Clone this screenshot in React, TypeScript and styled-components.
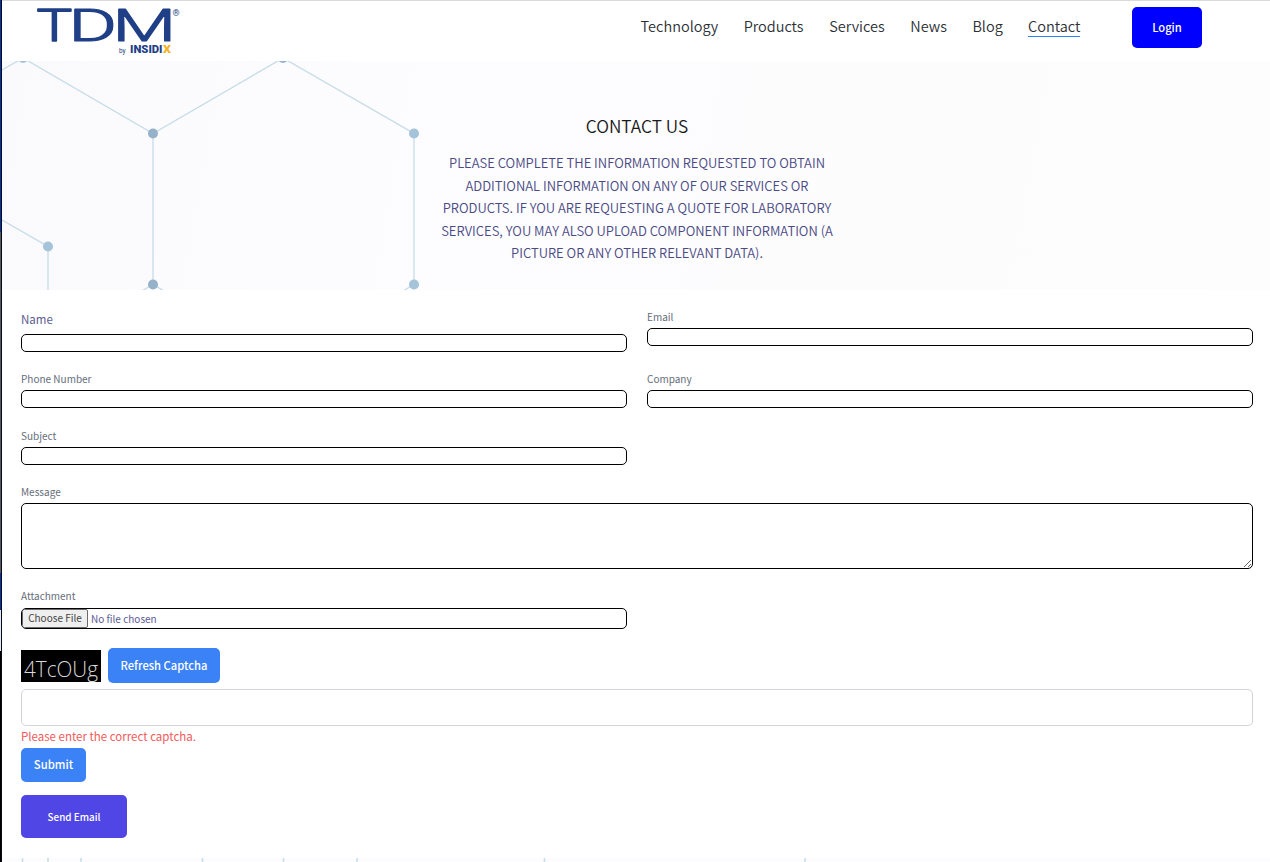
import React from 'react';
import styled, { createGlobalStyle } from 'styled-components';

const GlobalStyle = createGlobalStyle`
  *, *::before, *::after { box-sizing: border-box; }
  body {
    margin: 0;
    background: #fff;
    font-family: "Noto Sans CJK SC", "Noto Sans", sans-serif;
    overflow: hidden;
  }
  button, input, textarea { font-family: inherit; margin: 0; }
`;

const Screen = styled.div`
  display: flex;
  width: 1270px;
  height: 862px;
  overflow: hidden;
`;

const Edge = styled.div`
  flex: none;
  width: 2px;
  border-right: 1px solid #0a0a14;
  background: linear-gradient(
    #0033a0 0 232px, #55585c 232px 573px, #0033a0 573px 610px, #dfe8f5 610px 651px, #000 651px
  );
`;

const Window = styled.div`
  flex: 1;
  display: flex;
  flex-direction: column;
  border-top: 1px solid #dadada;
`;

const Header = styled.header`
  flex: none;
  display: flex;
  align-items: flex-start;
  height: 60px;
  padding: 6px 68px 0 34px;
`;

const Logo = styled.svg`
  flex: none;
  width: 146px;
  height: 50px;
  overflow: visible;
`;

const LogoLetters = styled.g`
  font-size: 44px;
  font-weight: 300;
  stroke: #1f3f87;
  stroke-width: 1.7px;
  stroke-linejoin: round;

  text { vector-effect: non-scaling-stroke; }
`;

const Nav = styled.nav`
  display: flex;
  gap: 25.6px;
  margin-left: auto;
  padding-top: 8px;
`;

const NavLink = styled.a<{ $active?: boolean; $w: number }>`
  width: ${(p) => p.$w}px;
  height: 22px;
  line-height: 22px;
  font-size: 14.5px;
  font-weight: 350;
  color: #2b3035;
  white-space: nowrap;
  border-bottom: ${(p) => (p.$active ? '1px solid #2f80ed' : 'none')};
`;

const LoginButton = styled.button`
  width: 70px;
  height: 41px;
  margin-left: 52px;
  padding: 0 0 2px;
  border: 0;
  border-radius: 5px;
  background: #0000ff;
  color: #fff;
  font-size: 11.2px;
  font-weight: 500;
`;

const Hero = styled.section`
  flex: none;
  height: 229px;
  display: grid;
  background: linear-gradient(100deg, #fafafc, #fdfcfe 35%, #fdfdfd 100%);
`;

const Pattern = styled.svg`
  grid-area: 1 / 1;
  width: 1268px;
  height: 229px;
`;

const HeroText = styled.div`
  grid-area: 1 / 1;
  justify-self: center;
  width: 420px;
  padding: 52px 0 0 2px;
  text-align: center;
`;

const Title = styled.h1`
  margin: 0;
  font-size: 17.3px;
  line-height: 26px;
  font-weight: 350;
  color: #1a1a1a;
`;

const Intro = styled.p`
  margin: 13px 0 0;
  font-size: 13px;
  line-height: 22.5px;
  font-weight: 350;
  color: #4a4a84;
  white-space: pre-line;
`;

const Form = styled.form`
  flex: none;
  display: flex;
  flex-direction: column;
  align-items: flex-start;
  height: 568px;
  padding: 20px 17px 0 19px;
`;

const Fields = styled.div`
  display: grid;
  width: 1232px;
  grid-template-columns: 606px 606px;
  column-gap: 20px;
  grid-template-rows: 62px 57px 56px 104px 59px;
`;

const Field = styled.label<{ $wide?: boolean; $first?: boolean; $gap?: number }>`
  grid-column: ${(p) => (p.$wide ? '1 / -1' : p.$first ? '1' : 'auto')};
  display: flex;
  flex-direction: column;
  gap: ${(p) => p.$gap ?? 4}px;
`;

const Label = styled.span<{ $large?: boolean }>`
  height: ${(p) => (p.$large ? 20 : 14)}px;
  line-height: ${(p) => (p.$large ? 19 : 14)}px;
  font-size: ${(p) => (p.$large ? 11.5 : 10)}px;
  color: ${(p) => (p.$large ? '#5a5a92' : '#656d7a')};
`;

const Input = styled.input`
  width: 100%;
  height: 18px;
  padding: 0 4px;
  border: 1px solid #000;
  border-radius: 5px;
  background: #fff;
`;

const TextArea = styled.textarea`
  display: block;
  width: 100%;
  height: 66px;
  border: 1px solid #000;
  border-radius: 5px;
  background: #fff;
`;

const FileBox = styled.span`
  display: flex;
  align-items: center;
  height: 21px;
  border: 1px solid #000;
  border-radius: 5px;
  color: #5a5a92;
  font-size: 10px;
  overflow: hidden;
`;

const ChooseFile = styled.span`
  width: 66px;
  height: 19px;
  margin-right: 3px;
  border: 1px solid #6b6b6b;
  border-radius: 2px;
  background: #efefef;
  color: #444;
  line-height: 16px;
  text-align: center;
`;

const CaptchaRow = styled.div`
  display: flex;
  align-items: center;
  gap: 7px;
  height: 35px;
`;

const Captcha = styled.svg`
  width: 80px;
  height: 32px;
  margin-top: 1px;
  background: #000;
`;

const Button = styled.button<{ $w: number; $h: number; $bg: string; $size: number; $top?: number; $lift?: number }>`
  width: ${(p) => p.$w}px;
  height: ${(p) => p.$h}px;
  margin-top: ${(p) => p.$top ?? 0}px;
  padding: 0 0 ${(p) => p.$lift ?? 0}px;
  border: 0;
  border-radius: 5px;
  background: ${(p) => p.$bg};
  color: #fff;
  font-size: ${(p) => p.$size}px;
  font-weight: 500;
`;

const CaptchaInput = styled.input`
  width: 1232px;
  height: 37px;
  margin-top: 6px;
  border: 1px solid #d1d5db;
  border-radius: 5px;
`;

const ErrorText = styled.p`
  margin: 1px 0 0;
  height: 21px;
  line-height: 19px;
  font-size: 11.5px;
  color: #f05a5a;
`;

const Footer = styled.footer`
  flex: none;
  height: 4px;
  background: #fcfbfd;
`;

const FooterPattern = styled.svg`
  display: block;
  width: 1268px;
  height: 4px;
`;

const links: [string, number][] = [
  ['Technology', 77.5], ['Products', 60], ['Services', 55.5], ['News', 36.5], ['Blog', 30], ['Contact', 52],
];

const nodes: [number, number, string][] = [
  [21, -3, '#a5c3d9'], [281, -3, '#94b4cc'], [151, 72.5, '#96b1ca'], [412, 72.5, '#a5c3d9'],
  [46, 185.5, '#a5c3d9'], [151, 223.5, '#96b1ca'], [412, 223.5, '#a5c3d9'],
];

export default function App() {
  return (
    <>
      <GlobalStyle />
      <Screen>
        <Edge />
        <Window>
          <Header>
            <Logo viewBox="0 0 146 50" fontFamily="Roboto, sans-serif" fill="#1f3f87">
              <LogoLetters>
                <text transform="translate(0.6 34) scale(1.36 1)">T</text>
                <text transform="translate(32.6 34) scale(1.68 1)">D</text>
                <text transform="translate(76.5 34) scale(1.67 1)">M</text>
              </LogoLetters>
              <text x="136.5" y="8.5" fontSize="9">®</text>
              <text x="83" y="46" fontSize="6.5">by</text>
              <text x="94" y="46" fontSize="11.5" fontWeight="900" textLength="32.5" lengthAdjust="spacingAndGlyphs">INSIDI</text>
              <text x="127" y="46" fontSize="11.5" fontWeight="900" fill="#f6b221" textLength="8" lengthAdjust="spacingAndGlyphs">X</text>
            </Logo>
            <Nav>
              {links.map(([name, w]) => (
                <NavLink key={name} $w={w} $active={name === 'Contact'}>{name}</NavLink>
              ))}
            </Nav>
            <LoginButton>Login</LoginButton>
          </Header>
          <Hero>
            <Pattern viewBox="0 0 1268 229">
              <g stroke="#c5dce9" strokeWidth="1.3" fill="none">
                <path d="M0 9L21 -3L151 72.5L281 -3L412 72.5V223.5L400 230.5" />
                <path d="M151 72.5V223.5M139 230.5L151 223.5L163 230.5" />
                <path d="M0 159L46 185.5V229" />
              </g>
              {nodes.map(([x, y, c]) => <circle key={`${x},${y}`} cx={x} cy={y} r="5" fill={c} />)}
            </Pattern>
            <HeroText>
              <Title>CONTACT US</Title>
              <Intro>
                {'PLEASE COMPLETE THE INFORMATION REQUESTED TO OBTAIN\nADDITIONAL INFORMATION ON ANY OF OUR SERVICES OR\nPRODUCTS. IF YOU ARE REQUESTING A QUOTE FOR LABORATORY\nSERVICES, YOU MAY ALSO UPLOAD COMPONENT INFORMATION (A\nPICTURE OR ANY OTHER RELEVANT DATA).'}
              </Intro>
            </HeroText>
          </Hero>
          <Form>
            <Fields>
              <Field><Label $large>Name</Label><Input /></Field>
              <Field><Label>Email</Label><Input /></Field>
              <Field><Label>Phone Number</Label><Input /></Field>
              <Field><Label>Company</Label><Input /></Field>
              <Field $first><Label>Subject</Label><Input /></Field>
              <Field $wide><Label>Message</Label><TextArea /></Field>
              <Field $first $gap={5}>
                <Label>Attachment</Label>
                <FileBox><ChooseFile>Choose File</ChooseFile>No file chosen</FileBox>
              </Field>
            </Fields>
            <CaptchaRow>
              <Captcha viewBox="0 0 80 32">
                <text x="3" y="26.5" fontFamily="Open Sans" fontWeight="300" fontSize="21.5" fill="#d8d8d8" textLength="74" lengthAdjust="spacingAndGlyphs">4TcOUg</text>
              </Captcha>
              <Button type="button" $w={112} $h={35} $bg="#3b82f6" $size={11.2} $lift={2}>Refresh Captcha</Button>
            </CaptchaRow>
            <CaptchaInput />
            <ErrorText>Please enter the correct captcha.</ErrorText>
            <Button type="button" $w={65} $h={34} $bg="#3b82f6" $size={11.3} $lift={2}>Submit</Button>
            <Button type="button" $w={106} $h={43} $bg="#4f46e5" $size={9.9} $top={13}>Send Email</Button>
          </Form>
          <Footer>
            <FooterPattern viewBox="0 0 1268 4" stroke="#c5dce9" strokeWidth="1.5">
              <path d="M20.5 0V4M46 0V4M79 0V4M200.5 0V4M281.5 0V4M355 0V4M542.5 0V4M803 0V4" />
            </FooterPattern>
          </Footer>
        </Window>
      </Screen>
    </>
  );
}
